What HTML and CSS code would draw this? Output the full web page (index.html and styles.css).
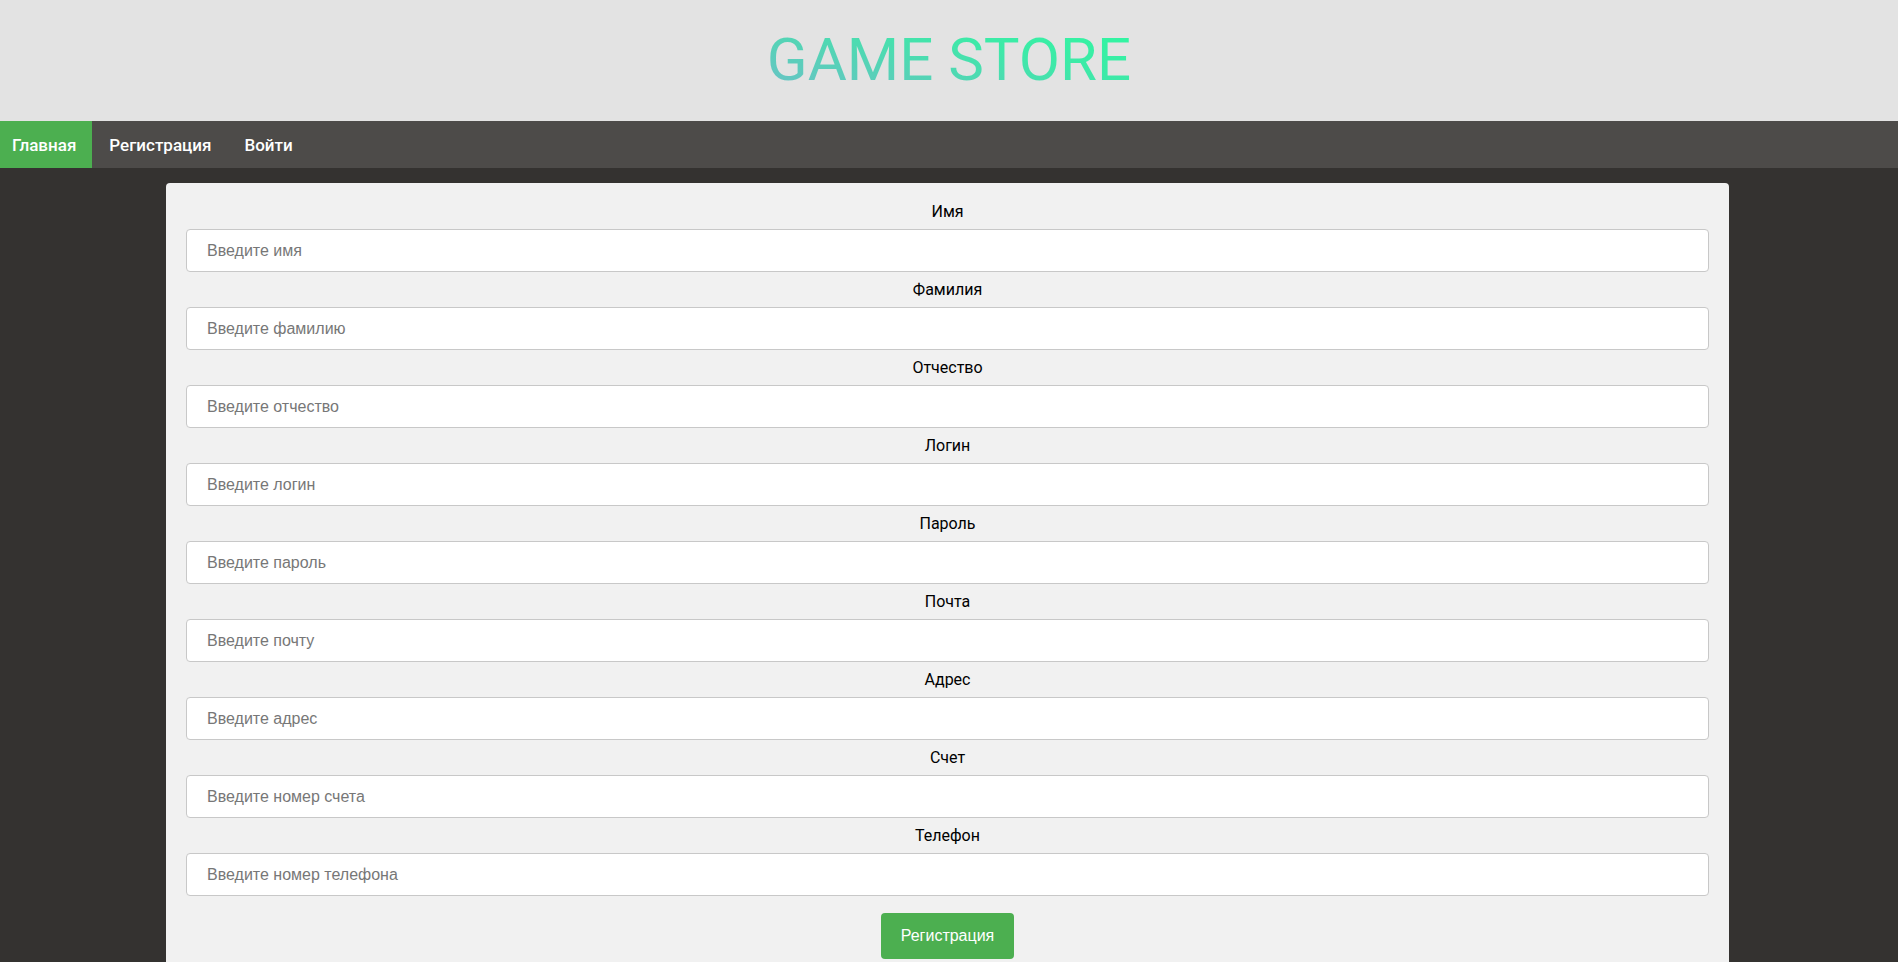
FILE: index.html
```html
<!DOCTYPE html>
<html lang="ru">
<head>
<meta charset="utf-8">
<title>Game Store</title>
<link rel="stylesheet" href="styles.css">
</head>
<body>
<header class="header">
  <h1 class="logo">GAME STORE</h1>
</header>
<nav class="nav">
  <a class="nav-link active" href="#">Главная</a>
  <a class="nav-link" href="#">Регистрация</a>
  <a class="nav-link" href="#">Войти</a>
</nav>
<main class="main">
  <form class="card">
    <label class="field-label">Имя</label>
    <input class="field" type="text" placeholder="Введите имя">
    <label class="field-label">Фамилия</label>
    <input class="field" type="text" placeholder="Введите фамилию">
    <label class="field-label">Отчество</label>
    <input class="field" type="text" placeholder="Введите отчество">
    <label class="field-label">Логин</label>
    <input class="field" type="text" placeholder="Введите логин">
    <label class="field-label">Пароль</label>
    <input class="field" type="password" placeholder="Введите пароль">
    <label class="field-label">Почта</label>
    <input class="field" type="text" placeholder="Введите почту">
    <label class="field-label">Адрес</label>
    <input class="field" type="text" placeholder="Введите адрес">
    <label class="field-label">Счет</label>
    <input class="field" type="text" placeholder="Введите номер счета">
    <label class="field-label">Телефон</label>
    <input class="field" type="text" placeholder="Введите номер телефона">
    <button class="submit" type="button">Регистрация</button>
  </form>
</main>
</body>
</html>
```
FILE: styles.css
```css
html, body {
  margin: 0;
  padding: 0;
}
body {
  background: #343230;
  font-family: Roboto, "Liberation Sans", sans-serif;
  height: 962px;
  overflow: hidden;
}
.header {
  background: #e3e3e3;
  height: 121px;
  display: flex;
  justify-content: center;
  align-items: center;
}
.logo {
  margin: 0;
  font-family: Roboto, sans-serif;
  font-weight: 400;
  font-size: 60px;
  letter-spacing: 0;
  line-height: 70px;
  background: linear-gradient(15deg, #6cc0c8 0%, #55d3b6 35%, #3ee9a8 65%, #2ff8a0 100%);
  -webkit-background-clip: text;
  background-clip: text;
  color: transparent;
  padding-bottom: 1px;
}
.nav {
  background: #4d4b49;
  height: 47px;
  display: flex;
}
.nav-link {
  color: #ffffff;
  text-decoration: none;
  font-size: 17px;
  font-weight: 500;
  padding: 0 16px 0 17px;
  display: flex;
  align-items: center;
}
.nav-link.active {
  background: #4caf50;
  padding-left: 12px;
}
.main {
  display: flex;
  justify-content: center;
  padding: 15px 3px 0 0;
}
.card {
  width: 1523px;
  background: #f1f1f1;
  border-radius: 4px;
  padding: 11px 20px 20px;
  display: flex;
  flex-direction: column;
  align-items: center;
}
.field-label {
  height: 35px;
  line-height: 35px;
  font-size: 16px;
  color: #000;
  text-align: center;
}
.field {
  box-sizing: border-box;
  width: 100%;
  height: 43px;
  border: 1px solid #c8c8c8;
  border-radius: 4px;
  background: #fff;
  padding: 0 20px;
  font-family: "Liberation Sans", Arial, sans-serif;
  font-size: 16px;
  color: #333;
  outline: none;
}
.field::placeholder {
  color: #777;
}
.submit {
  margin-top: 17px;
  width: 133px;
  height: 46px;
  background: #4caf50;
  color: #fff;
  border: none;
  border-radius: 4px;
  font-family: "Liberation Sans", Arial, sans-serif;
  font-size: 16px;
}
```
